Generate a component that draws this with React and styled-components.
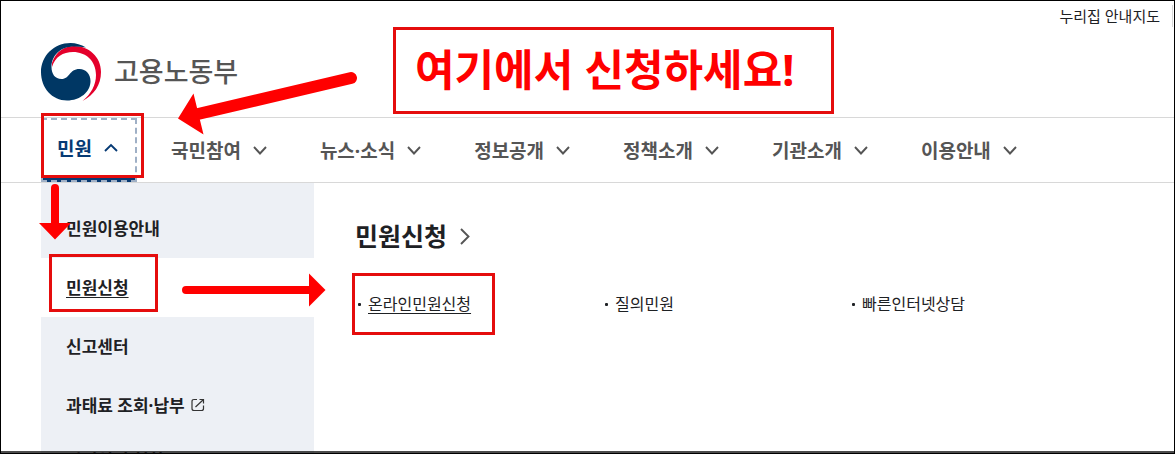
import styled, { createGlobalStyle, css } from "styled-components";

const menus = ["민원", "국민참여", "뉴스·소식", "정보공개", "정책소개", "기관소개", "이용안내"];

const sideMenus = [
  { label: "민원이용안내" },
  { label: "민원신청", active: true },
  { label: "신고센터" },
  { label: "과태료 조회·납부", external: true },
  { label: "민원처리 현황", short: true },
];

const links = [
  { label: "온라인민원신청", active: true },
  { label: "질의민원" },
  { label: "빠른인터넷상담" },
];

function Chevron({ d }) {
  return (
    <svg width="20" height="20" viewBox="0 0 20 20" fill="none" stroke="currentColor" strokeWidth="1.9" aria-hidden="true">
      <path d={d} />
    </svg>
  );
}

function Emblem() {
  return (
    <svg width="60" height="58" viewBox="0 0 60 58" aria-hidden="true">
      <path fill="#e4002b" d="M11 20C15 8 24 3 33 3C48 3 60 14 60 29C60 42 53 52 41.500 58C50 51 55 42 55 32C55 18 45 9 32 9C22 9 14 14 11 24Z" />
      <path fill="#003764" d="M45 4.500C40 1.500 35 0 29.500 0C13 0 0 13 0 29C0 45 11 57.500 26 57.500C39 57.500 49.500 49 49.500 38C49.500 31 45 26 38.500 26C28 26 29 36 20.500 36C14 36 10.500 31 10.500 24C10.500 12 20 3.500 33 3.500C37 3.500 41 3.800 45 4.500Z" />
    </svg>
  );
}

function ExternalIcon() {
  return (
    <svg width="14" height="14" viewBox="0 0 14 14" fill="none" stroke="#333" strokeWidth="1.2" aria-hidden="true">
      <path d="M6 1.500H3Q1 1.500 1 3.500V10.500Q1 12.500 3 12.500H10.500Q12.500 12.500 12.500 10.500V7.500M4.500 9L12.500 1.500M8.500 1.500H12.500V5.500" />
    </svg>
  );
}

export default function App() {
  return (
    <>
      <GlobalStyle />
      <Page>
        <Header>
          <Util>
            <a href="#sitemap">누리집 안내지도</a>
          </Util>
          <Logo href="#home">
            <Emblem />
            고용노동부
          </Logo>
        </Header>
        <Nav>
          {menus.map((menu, i) => (
            <NavButton key={menu} $active={i === 0} aria-expanded={i === 0}>
              {menu}
              <Chevron d={i === 0 ? "M4 13L10 7L16 13" : "M4 7L10 13.500L16 7"} />
            </NavButton>
          ))}
        </Nav>
        <Panel>
          <Side>
            {sideMenus.map((item) => (
              <SideLink key={item.label} href="#menu" $active={item.active} $short={item.short}>
                {item.label}
                {item.external && <ExternalIcon />}
              </SideLink>
            ))}
          </Side>
          <Content>
            <Title>
              민원신청
              <Chevron d="M6 3L13.500 10.500L6 18" />
            </Title>
            <LinkList>
              {links.map((link) => (
                <LinkItem key={link.label} $active={link.active}>
                  <a href="#link">{link.label}</a>
                </LinkItem>
              ))}
            </LinkList>
          </Content>
        </Panel>
        <BottomBar />
        <Guide />
      </Page>
    </>
  );
}

// red boxes and arrows that lie over the page
function Guide() {
  return (
    <>
      <Mark $x={41} $y={113} $w={103} $h={65} />
      <Mark $x={49} $y={254} $w={109} $h={58} />
      <Mark $x={352} $y={273} $w={143} $h={62} />
      <Mark $x={393} $y={27} $w={441} $h={87}>여기에서 신청하세요!</Mark>
      <Arrows width="400" height="320" viewBox="0 0 400 320" aria-hidden="true">
        <g stroke="#f00" strokeLinecap="round" fill="none">
          <path strokeWidth="12" d="M351 78L198 114" />
          <path strokeWidth="8" d="M55 188V226M186 290H312" />
        </g>
        <path fill="#f00" d="M178 118.500L193.500 93.500L203.500 134.500ZM39 223H71L55 239.500ZM309 273.500V306.500L325.500 290Z" />
      </Arrows>
    </>
  );
}

const GlobalStyle = createGlobalStyle`
  * {
    box-sizing: border-box;
  }
  body {
    margin: 0;
    background: #fff;
    color: #1e2124;
    font-family: "Noto Sans", "Noto Sans CJK KR", sans-serif;
  }
  a {
    color: inherit;
    text-decoration: none;
  }
`

const Page = styled.div`
  position: relative;
  display: flex;
  flex-direction: column;
  height: 100vh;
  overflow: hidden;
  border: 1px solid #000;
`

const Header = styled.header`
  display: flex;
  flex-direction: column;
  flex-shrink: 0;
  padding: 4px 1px 16px 40px;
`

const Util = styled.div`
  align-self: flex-end;
  font-size: 15px;
  line-height: 22px;
  a {
    display: block;
    padding-right: 12px;
  }
  border-right: 1px solid #d8d8d8;
`

const Logo = styled.a`
  display: flex;
  align-items: center;
  gap: 13px;
  align-self: flex-start;
  margin-top: 16px;
  font-size: 27px;
  line-height: 58px;
  font-weight: 500;
  color: #555;
`

const Nav = styled.nav`
  display: flex;
  gap: 18px;
  flex-shrink: 0;
  height: 66px;
  padding-left: 40px;
  border-top: 1px solid #d8d8d8;
  border-bottom: 1px solid #d8d8d8;
`

const NavButton = styled.button`
  display: flex;
  align-items: center;
  gap: 9px;
  padding: 0 16px;
  border: none;
  background: none;
  color: #555;
  font-family: inherit;
  font-size: 19px;
  font-weight: 700;
  white-space: nowrap;
  ${(p) => p.$active && css`
    border-bottom: 4px solid #063a74;
    color: #063a74;
    outline: 2px dashed #9fb0c6;
    outline-offset: -2px;
  `}
`

const Panel = styled.div`
  display: flex;
  flex: 1;
  min-height: 0;
  padding-left: 40px;
`

const Side = styled.div`
  flex: 0 0 273px;
  padding-top: 16px;
  background: #edf0f5;
`

const SideLink = styled.a`
  display: flex;
  align-items: center;
  gap: 6px;
  height: ${(p) => (p.$short ? 50 : 59)}px;
  padding: 0 24px 2px 25px;
  font-size: 17px;
  font-weight: 700;
  ${(p) => p.$active && css`
    background: #fff;
    text-decoration: underline;
    text-underline-offset: 3px;
  `}
`

const Content = styled.main`
  flex: 1;
  padding: 35px 78px 0 41px;
`

const Title = styled.h2`
  display: flex;
  align-items: center;
  gap: 8px;
  margin: 0;
  font-size: 25px;
  line-height: 36px;
  font-weight: 700;
  svg {
    color: #555;
  }
`

const LinkList = styled.ul`
  display: grid;
  grid-template-columns: repeat(3, 1fr);
  margin: 38px 0 0;
  padding: 0;
  list-style: none;
`

const LinkItem = styled.li`
  display: flex;
  align-items: center;
  gap: 7px;
  padding-left: 3px;
  font-size: 16px;
  line-height: 24px;
  &::before {
    content: "";
    width: 3px;
    height: 3px;
    border-radius: 1px;
    background: #1e2124;
  }
  a {
    text-decoration: ${(p) => (p.$active ? "underline" : "none")};
    text-underline-offset: 3px;
  }
`

const BottomBar = styled.div`
  position: absolute;
  left: 0;
  right: 0;
  bottom: 0;
  height: 2px;
  background: rgba(0, 0, 0, 0.7);
`

const Mark = styled.div`
  position: absolute;
  left: ${(p) => p.$x - 1}px;
  top: ${(p) => p.$y - 1}px;
  width: ${(p) => p.$w}px;
  height: ${(p) => p.$h}px;
  padding-left: 19px;
  border: 3px solid #e50d0d;
  color: #f00;
  font-size: 43px;
  line-height: 80px;
  font-weight: 700;
  white-space: nowrap;
  pointer-events: none;
`

const Arrows = styled.svg`
  position: absolute;
  left: -1px;
  top: -1px;
  pointer-events: none;
`
